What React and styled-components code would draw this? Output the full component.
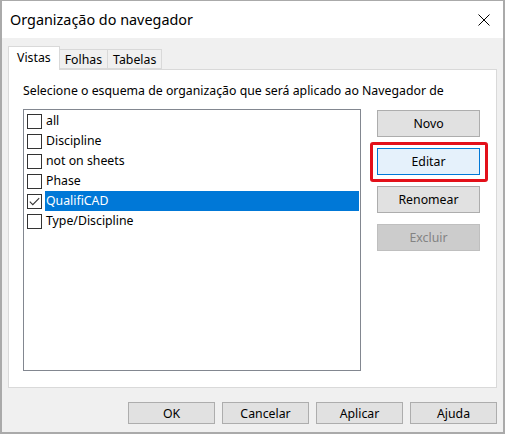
import React, { useState } from "react";
import styled, { createGlobalStyle } from "styled-components";

const GlobalStyle = createGlobalStyle`
  html, body {
    margin: 0;
    padding: 0;
    background: #ffffff;
  }
  body {
    font-family: "Noto Sans", "Open Sans", sans-serif;
    font-size: 12.3px;
    color: #000;
  }
`;

export const Window = styled.div`
  width: 505px;
  height: 434px;
  box-sizing: border-box;
  border: 2px solid #aaaaaa;
  border-top-width: 1px;
  display: flex;
  flex-direction: column;
  background: #f0f0f0;
`;

export const TitleBar = styled.div`
  height: 37px;
  flex: none;
  background: #ffffff;
  display: flex;
  align-items: center;
  justify-content: space-between;
  padding: 0 12px 0 8px;
  font-size: 14.4px;
`;

export const CloseButton = styled.button`
  border: none;
  background: transparent;
  padding: 0;
  width: 14px;
  height: 14px;
  display: flex;
  align-items: center;
  justify-content: center;
`;

export const Body = styled.div`
  flex: 1;
  display: flex;
  flex-direction: column;
  padding: 8px 6px 8px 6px;
`;

export const TabStrip = styled.div`
  display: flex;
  align-items: flex-end;
  height: 23px;
  position: relative;
  z-index: 1;
`;

export const Tab = styled.div`
  box-sizing: border-box;
  height: ${({ active }) => (active ? "24px" : "20px")};
  margin-bottom: ${({ active }) => (active ? "-1px" : "0")};
  padding: ${({ active }) => (active ? "0 8px 2px" : "0 5px")};
  border: 1px solid #d9d9d9;
  border-bottom: ${({ active }) => (active ? "none" : "1px solid #d9d9d9")};
  border-left: ${({ first, active }) =>
    first || active ? "1px solid #d9d9d9" : "none"};
  background: ${({ active }) => (active ? "#ffffff" : "#f0f0f0")};
  display: flex;
  align-items: center;
`;

export const Panel = styled.div`
  box-sizing: border-box;
  height: 319px;
  background: #ffffff;
  border: 1px solid #d9d9d9;
  padding: 13px 14px 0 14px;
  display: flex;
  flex-direction: column;
`;

export const Caption = styled.div`
  line-height: 16px;
  height: 16px;
  margin-bottom: 10px;
  white-space: nowrap;
`;

export const PanelRow = styled.div`
  display: flex;
  gap: 16px;
`;

export const ListBox = styled.div`
  box-sizing: border-box;
  width: 338px;
  height: 262px;
  border: 1px solid #828790;
  padding: 1px 1px;
  display: flex;
  flex-direction: column;
`;

export const Item = styled.div`
  height: 20px;
  display: flex;
  align-items: center;
  padding-left: 2px;
  cursor: default;
`;

export const CheckBox = styled.span`
  box-sizing: border-box;
  width: 15px;
  height: 15px;
  border: 1px solid #333333;
  background: #ffffff;
  flex: none;
  display: flex;
  align-items: center;
  justify-content: center;
  margin-right: 3px;
`;

export const ItemLabel = styled.span`
  flex: 1;
  height: 20px;
  line-height: 20px;
  padding-left: 1px;
  background: ${({ selected }) => (selected ? "#0078d7" : "transparent")};
  color: ${({ selected }) => (selected ? "#ffffff" : "#000000")};
`;

export const SideButtons = styled.div`
  display: flex;
  flex-direction: column;
  gap: 11px;
  padding-top: 1px;
`;

export const Button = styled.button`
  box-sizing: border-box;
  width: ${({ wide }) => (wide ? "103px" : "87px")};
  height: ${({ wide }) => (wide ? "27px" : "22px")};
  font-family: inherit;
  font-size: 12.3px;
  padding: 0;
  border: 1px solid
    ${({ focused, disabled }) =>
      focused ? "#0078d7" : disabled ? "#bfbfbf" : "#adadad"};
  background: ${({ focused, disabled }) =>
    focused ? "#e5f1fb" : disabled ? "#cccccc" : "#e1e1e1"};
  color: ${({ disabled }) => (disabled ? "#838383" : "#000000")};
  position: relative;

  ${({ marked }) =>
    marked &&
    `
    &::after {
      content: "";
      position: absolute;
      top: -7px;
      left: -8px;
      right: -9px;
      bottom: -8px;
      border: 3px solid #e3101a;
      border-radius: 3px;
      pointer-events: none;
    }
  `}
`;

export const Footer = styled.div`
  display: flex;
  justify-content: flex-end;
  gap: 7px;
  margin-top: 14px;
`;

const CheckMark = () => (
  <svg width="11" height="9" viewBox="0 0 11 9">
    <path d="M0.8 4.6 L3.8 7.6 L10.2 1.2" fill="none" stroke="#333" strokeWidth="1.1" />
  </svg>
);

const CloseIcon = () => (
  <svg width="12" height="12" viewBox="0 0 12 12">
    <path d="M0.5 0.5 L11.5 11.5 M11.5 0.5 L0.5 11.5" stroke="#000" strokeWidth="1" />
  </svg>
);

const schemes = [
  { name: "all", checked: false },
  { name: "Discipline", checked: false },
  { name: "not on sheets", checked: false },
  { name: "Phase", checked: false },
  { name: "QualifiCAD", checked: true },
  { name: "Type/Discipline", checked: false },
];

export default function App() {
  const [tab, setTab] = useState("Vistas");
  const [selected, setSelected] = useState("QualifiCAD");

  return (
    <>
      <GlobalStyle />
      <Window>
        <TitleBar>
          <span>Organização do navegador</span>
          <CloseButton aria-label="Fechar">
            <CloseIcon />
          </CloseButton>
        </TitleBar>
        <Body>
          <TabStrip>
            {["Vistas", "Folhas", "Tabelas"].map((t, i) => (
              <Tab key={t} first={i === 0} active={tab === t} onClick={() => setTab(t)}>
                {t}
              </Tab>
            ))}
          </TabStrip>
          <Panel>
            <Caption>
              Selecione o esquema de organização que será aplicado ao Navegador de
            </Caption>
            <PanelRow>
              <ListBox>
                {schemes.map((s) => (
                  <Item key={s.name} onClick={() => setSelected(s.name)}>
                    <CheckBox>{s.checked && <CheckMark />}</CheckBox>
                    <ItemLabel selected={selected === s.name}>{s.name}</ItemLabel>
                  </Item>
                ))}
              </ListBox>
              <SideButtons>
                <Button wide>Novo</Button>
                <Button wide focused marked>
                  Editar
                </Button>
                <Button wide>Renomear</Button>
                <Button wide disabled>
                  Excluir
                </Button>
              </SideButtons>
            </PanelRow>
          </Panel>
          <Footer>
            <Button>OK</Button>
            <Button>Cancelar</Button>
            <Button>Aplicar</Button>
            <Button>Ajuda</Button>
          </Footer>
        </Body>
      </Window>
    </>
  );
}
